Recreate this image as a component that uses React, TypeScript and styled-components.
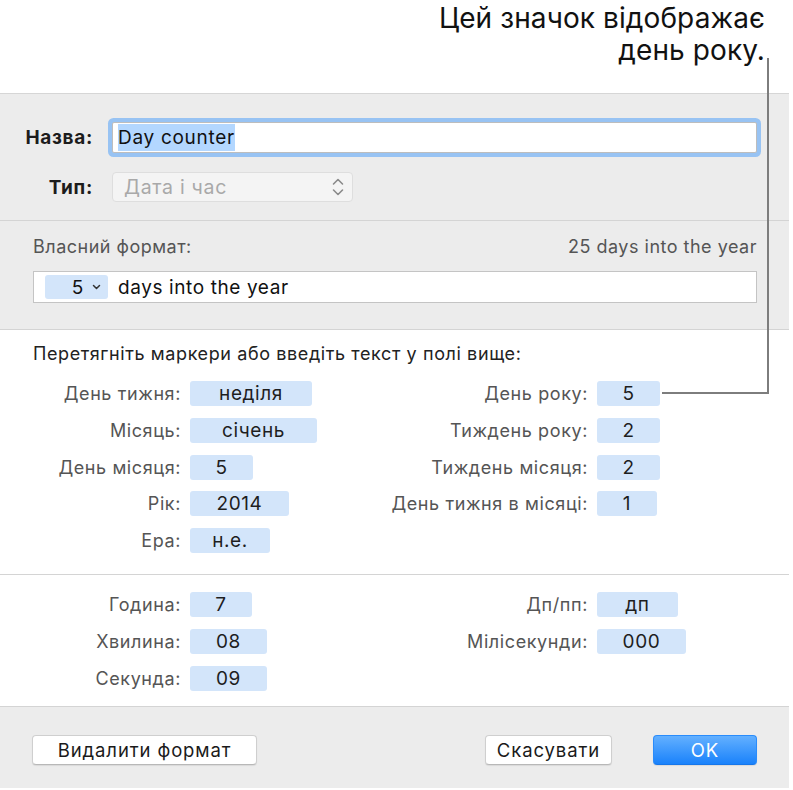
import styled, { createGlobalStyle } from 'styled-components'

const GlobalStyle = createGlobalStyle`
  body {
    margin: 0;
    background: #ffffff;
    font-family: Inter, "Liberation Sans", Arial, sans-serif;
  }
`

const Page = styled.div`
  position: relative;
  width: 793px;
  height: 790px;
  overflow: hidden;
  background: #ffffff;
`

const Header = styled.div`
  height: 93px;
  box-sizing: border-box;
  padding: 2px 28px 0 0;
  text-align: right;
  font-family: Inter, Roboto, sans-serif;
  font-size: 28px;
  letter-spacing: 0.1px;
  line-height: 32px;
  color: #111;
`

const Dialog = styled.div`
  width: 789px;
  background: #ececec;
  border-top: 1px solid #d6d6d6;
`

const Section = styled.div<{ $white?: boolean }>`
  background: ${p => (p.$white ? '#ffffff' : '#ececec')};
  border-bottom: 1px solid #d4d4d4;
`

const NameGrid = styled.div`
  display: grid;
  grid-template-columns: 93px 1fr;
  column-gap: 19px;
  row-gap: 19px;
  align-items: center;
  padding: 28px 32px 18px 0;
`

const BoldLabel = styled.div`
  text-align: right;
  font-size: 19px;
  letter-spacing: 0.7px;
  font-weight: 700;
  color: #1c1c1c;
`

const NameInput = styled.div`
  height: 31px;
  box-sizing: border-box;
  background: #fff;
  border: 1px solid #bdbdbd;
  border-radius: 2px;
  box-shadow: 0 0 0 4px #98c3f3;
  display: flex;
  align-items: center;
  padding-left: 5px;
  font-size: 19px;
  letter-spacing: 0.7px;
  color: #111;
`

const Selected = styled.span`
  background: #b3d7ff;
  line-height: 27px;
`

const Popup = styled.div`
  width: 241px;
  height: 30px;
  box-sizing: border-box;
  background: #f4f4f4;
  border: 1px solid #dedede;
  border-radius: 4px;
  display: flex;
  align-items: center;
  justify-content: space-between;
  padding: 0 6px 0 11px;
  font-size: 19.5px;
  letter-spacing: 0.7px;
  color: #a9a9a9;
`

const FormatBlock = styled.div`
  padding: 16px 32px 26px 33px;
`

const FormatHead = styled.div`
  display: flex;
  justify-content: space-between;
  font-size: 18px;
  letter-spacing: 0.5px;
  line-height: 20px;
  color: #555;
  margin-bottom: 14px;
`

const FormatField = styled.div`
  height: 32px;
  box-sizing: border-box;
  background: #fff;
  border: 1px solid #c4c4c4;
  display: flex;
  align-items: center;
  gap: 10px;
  padding-left: 11px;
  font-size: 19px;
  letter-spacing: 0.6px;
  color: #111;
`

const FieldToken = styled.div`
  width: 63px;
  height: 24px;
  box-sizing: border-box;
  background: #d3e5fa;
  border-radius: 3px;
  display: flex;
  align-items: center;
  justify-content: flex-end;
  gap: 8px;
  padding-right: 7px;
`

const Intro = styled.div`
  padding: 14px 0 0 33px;
  font-size: 18px;
  letter-spacing: 0.6px;
  line-height: 20px;
  color: #222;
`

const TokenGrid = styled.div<{ $top: number; $bottom: number }>`
  display: grid;
  grid-template-columns: 181px 150px 239px auto;
  column-gap: 9px;
  row-gap: 11.75px;
  align-items: center;
  padding: ${p => p.$top}px 0 ${p => p.$bottom}px 0;
`

const FieldLabel = styled.div`
  text-align: right;
  font-size: 18px;
  letter-spacing: 0.6px;
  color: #555;
  white-space: nowrap;
`

const Token = styled.div<{ $w: number }>`
  width: ${p => p.$w}px;
  height: 25px;
  background: #d3e5fa;
  border-radius: 3px;
  display: flex;
  align-items: center;
  justify-content: center;
  font-size: 19px;
  letter-spacing: 0.6px;
  color: #1e1e1e;
`

const Footer = styled.div`
  display: flex;
  align-items: center;
  padding: 28px 32px 23px 32px;
  gap: 41px;
`

const Button = styled.button<{ $primary?: boolean; $w: number }>`
  width: ${p => p.$w}px;
  height: 30px;
  box-sizing: border-box;
  border-radius: 4px;
  font-family: Inter, Roboto, sans-serif;
  font-size: 18.5px;
  letter-spacing: 0.9px;
  padding: 0;
  border: 1px solid ${p => (p.$primary ? '#2a8cfb' : '#cfcfcf')};
  border-bottom-color: ${p => (p.$primary ? '#1676ea' : '#b8b8b8')};
  background: ${p => (p.$primary ? 'linear-gradient(#63b0ff, #1a82fb)' : '#ffffff')};
  color: ${p => (p.$primary ? '#ffffff' : '#1a1a1a')};
  box-shadow: 0 1px 1px rgba(0, 0, 0, 0.08);
`

const Spacer = styled.div`
  flex: 1;
`

const Callout = styled.svg`
  position: absolute;
  left: 0;
  top: 0;
  pointer-events: none;
`

const Chevrons = () => (
  <svg width="16" height="22" viewBox="0 0 16 22" fill="none" stroke="#8a8a8a" strokeWidth="1.6" strokeLinecap="round" strokeLinejoin="round">
    <path d="M3.5 8 L8 3.5 L12.5 8" />
    <path d="M3.5 14 L8 18.5 L12.5 14" />
  </svg>
)

const SmallChevron = () => (
  <svg width="9" height="6" viewBox="0 0 9 6" fill="none" stroke="#333" strokeWidth="1.5" strokeLinecap="round" strokeLinejoin="round">
    <path d="M1.5 1.5 L4.5 4.5 L7.5 1.5" />
  </svg>
)

type Field = { label: string; value: string; w: number }

const dateLeft: Field[] = [
  { label: 'День тижня:', value: 'неділя', w: 122 },
  { label: 'Місяць:', value: 'січень', w: 127 },
  { label: 'День місяця:', value: '5', w: 63 },
  { label: 'Рік:', value: '2014', w: 99 },
  { label: 'Ера:', value: 'н.е.', w: 80 },
]

const dateRight: Field[] = [
  { label: 'День року:', value: '5', w: 63 },
  { label: 'Тиждень року:', value: '2', w: 63 },
  { label: 'Тиждень місяця:', value: '2', w: 63 },
  { label: 'День тижня в місяці:', value: '1', w: 60 },
]

const timeLeft: Field[] = [
  { label: 'Година:', value: '7', w: 62 },
  { label: 'Хвилина:', value: '08', w: 77 },
  { label: 'Секунда:', value: '09', w: 77 },
]

const timeRight: Field[] = [
  { label: 'Дп/пп:', value: 'дп', w: 81 },
  { label: 'Мілісекунди:', value: '000', w: 89 },
]

function Rows ({ left, right }: { left: Field[]; right: Field[] }) {
  return (
    <>
      {left.map((f, i) => {
        const r = right[i]
        return [
          <FieldLabel key={'l' + i}>{f.label}</FieldLabel>,
          <Token key={'t' + i} $w={f.w}>{f.value}</Token>,
          <FieldLabel key={'rl' + i}>{r ? r.label : ''}</FieldLabel>,
          r ? <Token key={'rt' + i} $w={r.w}>{r.value}</Token> : <div key={'rt' + i} />,
        ]
      })}
    </>
  )
}

export default function App () {
  return (
    <Page>
      <GlobalStyle />
      <Header>
        Цей значок відображає<br />день року.
      </Header>
      <Dialog>
        <Section>
          <NameGrid>
            <BoldLabel>Назва:</BoldLabel>
            <NameInput><Selected>Day counter</Selected></NameInput>
            <BoldLabel>Тип:</BoldLabel>
            <Popup>
              <span>Дата і час</span>
              <Chevrons />
            </Popup>
          </NameGrid>
        </Section>
        <Section>
          <FormatBlock>
            <FormatHead>
              <span>Власний формат:</span>
              <span>25 days into the year</span>
            </FormatHead>
            <FormatField>
              <FieldToken>5 <SmallChevron /></FieldToken>
              <span>days into the year</span>
            </FormatField>
          </FormatBlock>
        </Section>
        <Section $white>
          <Intro>Перетягніть маркери або введіть текст у полі вище:</Intro>
          <TokenGrid $top={17} $bottom={21}>
            <Rows left={dateLeft} right={dateRight} />
          </TokenGrid>
        </Section>
        <Section $white>
          <TokenGrid $top={17} $bottom={15}>
            <Rows left={timeLeft} right={timeRight} />
          </TokenGrid>
        </Section>
        <Footer>
          <Button $w={225}>Видалити формат</Button>
          <Spacer />
          <Button $w={127}>Скасувати</Button>
          <Button $primary $w={104}>OK</Button>
        </Footer>
      </Dialog>
      <Callout width="793" height="790">
        <path d="M768 58 V393 H662" fill="none" stroke="#7d7d7d" strokeWidth="2" />
      </Callout>
    </Page>
  )
}
